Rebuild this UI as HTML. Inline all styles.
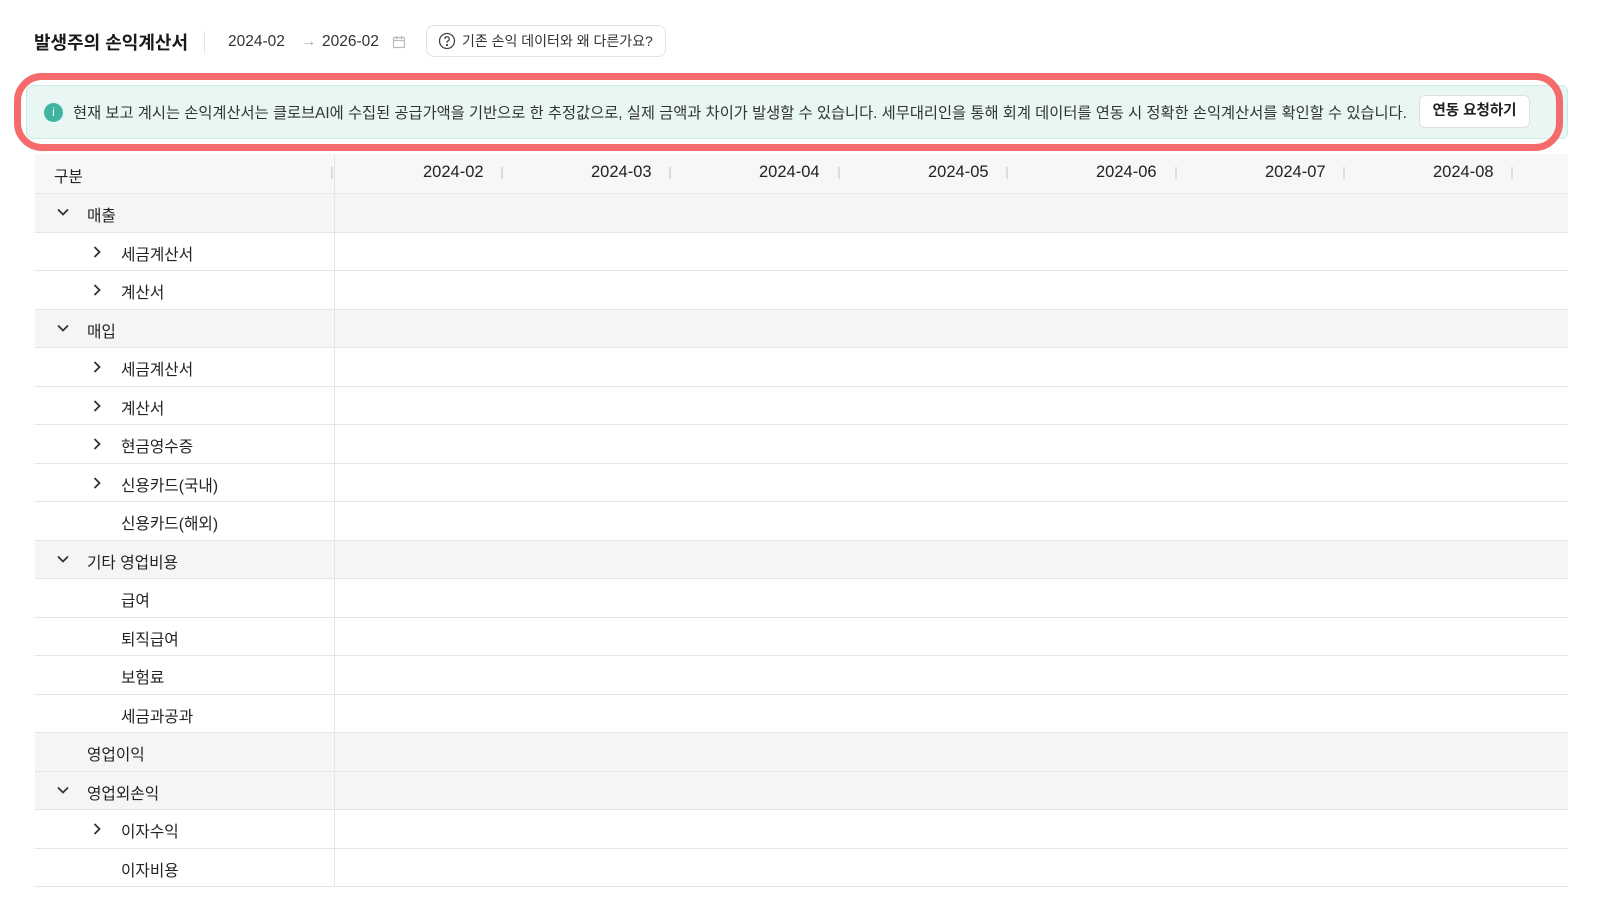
<!DOCTYPE html>
<html><head><meta charset="utf-8"><style>
*{margin:0;padding:0;box-sizing:border-box}
body{width:1600px;height:900px;overflow:hidden;background:#fff;font-family:"Liberation Sans","Noto Sans CJK KR",sans-serif;color:#222;position:relative}
.abs{position:absolute}
.title{left:34px;top:29px;font-size:18px;font-weight:700;color:#1a1a1a}
.vsep{left:204px;top:31px;width:1px;height:22px;background:#e3e3e3}
.date{top:33px;font-size:15.5px;color:#333}
.qbtn{left:426px;top:25px;width:240px;height:32px;border:1px solid #e2e2e2;border-radius:8px;font-size:14px;color:#333;display:flex;align-items:center;padding-left:11px;gap:6px}
.red{left:14px;top:73px;width:1549px;height:78px;border:7px solid #f56b6b;border-radius:28px}
.banner{left:26px;top:85px;width:1542px;height:54px;background:#e8f7f4;border:1px solid #c9ece5;border-radius:6px}
.btxt{left:73px;top:101px;font-size:15.3px;color:#333;white-space:nowrap}
.info{left:44px;top:103px;width:19px;height:19px;border-radius:50%;background:#3fb5a0;color:#fff;font-size:12px;text-align:center;line-height:19px}
.lbtn{left:1419px;top:95px;width:111px;height:33px;background:#fff;border:1px solid #e0e0e0;border-radius:6px;font-size:14.5px;font-weight:700;text-align:center;line-height:31px;color:#222}
.row{position:absolute;left:35px;width:1533px;height:38.5px;border-bottom:1px solid #e5e5e5;font-size:15.7px}
.row .c1{position:absolute;left:0;top:0;width:300px;height:100%;border-right:1px solid #e5e5e5}
.row span{position:absolute;top:9px}
.g{background:#f5f5f5}
.hd{background:#f7f7f7}
.mon{position:absolute;top:9px;font-size:16.5px;color:#222}
.tick{position:absolute;top:13px;width:2px;height:12px;background:#ddd}
svg{position:absolute}
</style></head><body>
<div class="abs title">발생주의 손익계산서</div>
<div class="abs vsep"></div>
<div class="abs date" style="left:228px">2024-02</div>
<div class="abs date" style="left:301px;color:#aaa">→</div>
<div class="abs date" style="left:322px">2026-02</div>
<svg style="left:392px;top:35px" width="14" height="14" viewBox="0 0 14 14" fill="none" stroke="#bbb" stroke-width="1.2"><rect x="1.5" y="2.5" width="11" height="10" rx="1"/><path d="M1.5 5.5h11M4.5 1v3M9.5 1v3"/></svg>
<div class="abs qbtn"><svg style="position:static" width="18" height="18" viewBox="0 0 18 18" fill="none" stroke="#444" stroke-width="1.3"><circle cx="9" cy="9" r="7.5"/><path d="M6.8 7a2.2 2.2 0 1 1 3 2c-.6.3-.8.7-.8 1.3v.5"/><circle cx="9" cy="13" r=".5" fill="#444"/></svg>기존 손익 데이터와 왜 다른가요?</div>
<div class="abs banner"></div>
<div class="abs info">i</div>
<div class="abs btxt">현재 보고 계시는 손익계산서는 클로브AI에 수집된 공급가액을 기반으로 한 추정값으로, 실제 금액과 차이가 발생할 수 있습니다. 세무대리인을 통해 회계 데이터를 연동 시 정확한 손익계산서를 확인할 수 있습니다.</div>
<div class="abs lbtn">연동 요청하기</div>
<div class="abs red"></div>

<div class="row hd" style="top:154px;height:40px">
<div class="c1"><span style="left:19px;top:10px">구분</span><div class="tick" style="left:296px"></div></div>
<div class="mon" style="left:388px">2024-02</div><div class="tick" style="left:466px"></div>
<div class="mon" style="left:556px">2024-03</div><div class="tick" style="left:634px"></div>
<div class="mon" style="left:724px">2024-04</div><div class="tick" style="left:803px"></div>
<div class="mon" style="left:893px">2024-05</div><div class="tick" style="left:971px"></div>
<div class="mon" style="left:1061px">2024-06</div><div class="tick" style="left:1140px"></div>
<div class="mon" style="left:1230px">2024-07</div><div class="tick" style="left:1308px"></div>
<div class="mon" style="left:1398px">2024-08</div><div class="tick" style="left:1476px"></div>
</div>

<div class="row g" style="top:194px"><div class="c1"><svg style="left:22px;top:14px" width="12" height="8" viewBox="0 0 12 8" fill="none" stroke="#333" stroke-width="1.8"><path d="M1 1.5l5 5 5-5"/></svg><span style="left:52px">매출</span></div></div>
<div class="row" style="top:232.5px"><div class="c1"><svg style="left:58px;top:13px" width="8" height="12" viewBox="0 0 8 12" fill="none" stroke="#333" stroke-width="1.8"><path d="M1.5 1l5 5-5 5"/></svg><span style="left:86px">세금계산서</span></div></div>
<div class="row" style="top:271px"><div class="c1"><svg style="left:58px;top:13px" width="8" height="12" viewBox="0 0 8 12" fill="none" stroke="#333" stroke-width="1.8"><path d="M1.5 1l5 5-5 5"/></svg><span style="left:86px">계산서</span></div></div>
<div class="row g" style="top:309.5px"><div class="c1"><svg style="left:22px;top:14px" width="12" height="8" viewBox="0 0 12 8" fill="none" stroke="#333" stroke-width="1.8"><path d="M1 1.5l5 5 5-5"/></svg><span style="left:52px">매입</span></div></div>
<div class="row" style="top:348px"><div class="c1"><svg style="left:58px;top:13px" width="8" height="12" viewBox="0 0 8 12" fill="none" stroke="#333" stroke-width="1.8"><path d="M1.5 1l5 5-5 5"/></svg><span style="left:86px">세금계산서</span></div></div>
<div class="row" style="top:386.5px"><div class="c1"><svg style="left:58px;top:13px" width="8" height="12" viewBox="0 0 8 12" fill="none" stroke="#333" stroke-width="1.8"><path d="M1.5 1l5 5-5 5"/></svg><span style="left:86px">계산서</span></div></div>
<div class="row" style="top:425px"><div class="c1"><svg style="left:58px;top:13px" width="8" height="12" viewBox="0 0 8 12" fill="none" stroke="#333" stroke-width="1.8"><path d="M1.5 1l5 5-5 5"/></svg><span style="left:86px">현금영수증</span></div></div>
<div class="row" style="top:463.5px"><div class="c1"><svg style="left:58px;top:13px" width="8" height="12" viewBox="0 0 8 12" fill="none" stroke="#333" stroke-width="1.8"><path d="M1.5 1l5 5-5 5"/></svg><span style="left:86px">신용카드(국내)</span></div></div>
<div class="row" style="top:502px"><div class="c1"><span style="left:86px">신용카드(해외)</span></div></div>
<div class="row g" style="top:540.5px"><div class="c1"><svg style="left:22px;top:14px" width="12" height="8" viewBox="0 0 12 8" fill="none" stroke="#333" stroke-width="1.8"><path d="M1 1.5l5 5 5-5"/></svg><span style="left:52px">기타 영업비용</span></div></div>
<div class="row" style="top:579px"><div class="c1"><span style="left:86px">급여</span></div></div>
<div class="row" style="top:617.5px"><div class="c1"><span style="left:86px">퇴직급여</span></div></div>
<div class="row" style="top:656px"><div class="c1"><span style="left:86px">보험료</span></div></div>
<div class="row" style="top:694.5px"><div class="c1"><span style="left:86px">세금과공과</span></div></div>
<div class="row g" style="top:733px"><div class="c1"><span style="left:52px">영업이익</span></div></div>
<div class="row g" style="top:771.5px"><div class="c1"><svg style="left:22px;top:14px" width="12" height="8" viewBox="0 0 12 8" fill="none" stroke="#333" stroke-width="1.8"><path d="M1 1.5l5 5 5-5"/></svg><span style="left:52px">영업외손익</span></div></div>
<div class="row" style="top:810px"><div class="c1"><svg style="left:58px;top:13px" width="8" height="12" viewBox="0 0 8 12" fill="none" stroke="#333" stroke-width="1.8"><path d="M1.5 1l5 5-5 5"/></svg><span style="left:86px">이자수익</span></div></div>
<div class="row" style="top:848.5px"><div class="c1"><span style="left:86px">이자비용</span></div></div>
</body></html>
